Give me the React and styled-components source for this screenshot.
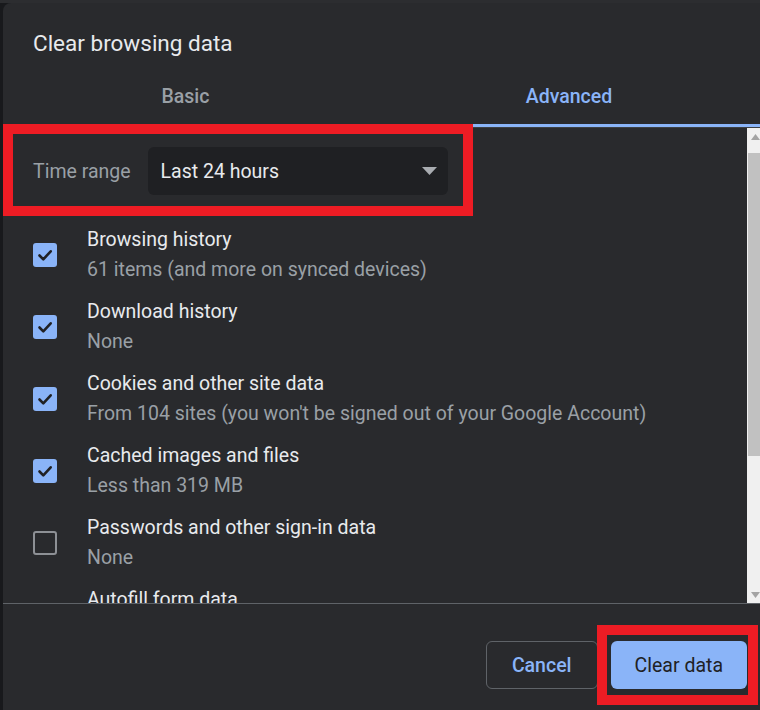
import styled, { createGlobalStyle } from "styled-components";

const GlobalStyle = createGlobalStyle`
    html, body {
        margin: 0;
        padding: 0;
        background: #18191c;
        overflow: hidden;
    }
    body {
        border-top: 3px solid #2c2d30;
        font-family: Roboto, "Liberation Sans", sans-serif;
    }
`

const Page = styled.div`
    display: flex;
    padding-left: 3px;
    height: 707px;
`

const Dialog = styled.div`
    position: relative;
    display: flex;
    flex-direction: column;
    width: 767px;
    flex-shrink: 0;
    height: 720px;
    background: #292a2d;
    border-radius: 8px 0 0 0;
    color: #e8eaed;
`

const Title = styled.h1`
    margin: 0;
    padding: 28px 30px 0;
    height: 38px;
    font-size: 22.5px;
    font-weight: 400;
    line-height: 24px;
    color: #e8eaed;
`

const TabBar = styled.div`
    display: grid;
    grid-template-columns: 365px 402px;
    border-bottom: 1px solid #3c4043;
`

const Tab = styled.div`
    display: flex;
    align-items: center;
    justify-content: center;
    height: 55px;
    font-size: 19.5px;
    font-weight: 500;
    color: ${props => props.active ? "#8ab4f8" : "#9aa0a6"};
    border-bottom: 3px solid ${props => props.active ? "#8ab4f8" : "transparent"};
`

const Body = styled.div`
    display: flex;
    height: 475px;
    border-bottom: 1px solid #5f6368;
`

const List = styled.div`
    flex: 1;
    overflow: hidden;
`

const TimeRow = styled.div`
    display: flex;
    align-items: center;
    gap: 17px;
    padding: 19px 30px 24px;
`

const Label = styled.span`
    font-size: 19.5px;
    color: #9aa0a6;
`

const Select = styled.div`
    display: flex;
    align-items: center;
    justify-content: space-between;
    box-sizing: border-box;
    width: 300px;
    height: 48px;
    padding: 0 11px 0 13px;
    background: #1f2023;
    border-radius: 6px;
    font-size: 19.5px;
    color: #e8eaed;
`

const Row = styled.div`
    display: flex;
    align-items: center;
    gap: 30px;
    padding: 6px 30px;
`

const Box = styled.div`
    display: flex;
    align-items: center;
    justify-content: center;
    box-sizing: border-box;
    width: 24px;
    height: 24px;
    flex-shrink: 0;
    border-radius: 3px;
    background: ${props => props.checked ? "#8ab4f8" : "transparent"};
    border: ${props => props.checked ? "none" : "2.5px solid #8d9095"};
`

const Texts = styled.div`
    display: flex;
    flex-direction: column;
`

const ItemTitle = styled.span`
    font-size: 19.5px;
    line-height: 30px;
    color: #e8eaed;
`

const ItemSub = styled.span`
    font-size: 19.5px;
    line-height: 30px;
    color: #9aa0a6;
`

const ScrollTrack = styled.div`
    display: flex;
    flex-direction: column;
    align-items: center;
    width: 17px;
    margin-right: 6px;
    background: #f0f0f0;
`

const ScrollButton = styled.div`
    display: flex;
    align-items: center;
    justify-content: center;
    width: 100%;
    height: 17px;
`

const Thumb = styled.div`
    width: 15px;
    height: 303px;
    margin-top: 8px;
    background: #c1c1c1;
`

const Spacer = styled.div`
    flex: 1;
`

const Footer = styled.div`
    display: flex;
    justify-content: flex-end;
    gap: 13px;
    padding: 37px 23px 0 0;
`

const Button = styled.button`
    height: 48px;
    padding: 0 ${props => props.primary ? "24px" : "25px"};
    border-radius: 6px;
    font-family: Roboto, "Liberation Sans", sans-serif;
    font-size: 19.5px;
    font-weight: ${props => props.primary ? 400 : 500};
    cursor: pointer;
    background: ${props => props.primary ? "#8ab4f8" : "transparent"};
    color: ${props => props.primary ? "#202124" : "#8ab4f8"};
    border: ${props => props.primary ? "none" : "1px solid #5f6368"};
`

// red annotation frames drawn over the screenshot
const Highlight = styled.div`
    position: absolute;
    left: ${props => props.left}px;
    top: ${props => props.top}px;
    width: ${props => props.width}px;
    height: ${props => props.height}px;
    box-sizing: border-box;
    border: 10px solid #ed1c24;
    pointer-events: none;
`

const items = [
    { title: "Browsing history", sub: "61 items (and more on synced devices)", checked: true },
    { title: "Download history", sub: "None", checked: true },
    { title: "Cookies and other site data", sub: "From 104 sites (you won't be signed out of your Google Account)", checked: true },
    { title: "Cached images and files", sub: "Less than 319 MB", checked: true },
    { title: "Passwords and other sign-in data", sub: "None", checked: false },
    { title: "Autofill form data", sub: "None", checked: false },
]

const Check = () => (
    <svg width="24" height="24" viewBox="0 0 24 24">
        <path d="M6.5 12.5l3.8 3.8 7.4-8" fill="none" stroke="#202124" strokeWidth="2.6" strokeLinecap="round" strokeLinejoin="round" />
    </svg>
)

const Arrow = ({ down }) => (
    <svg width="9" height="6" viewBox="0 0 9 6">
        <polygon points={down ? "0,0 9,0 4.5,6" : "0,6 9,6 4.5,0"} fill="#a3a3a3" />
    </svg>
)

const App = () => {
    return (
        <Page>
            <GlobalStyle />
            <Dialog>
                <Title>Clear browsing data</Title>
                <TabBar>
                    <Tab>Basic</Tab>
                    <Tab active>Advanced</Tab>
                </TabBar>
                <Body>
                    <List>
                        <TimeRow>
                            <Label>Time range</Label>
                            <Select>
                                Last 24 hours
                                <svg width="15" height="8" viewBox="0 0 15 8">
                                    <polygon points="0,0 15,0 7.5,8" fill="#a9acb1" />
                                </svg>
                            </Select>
                        </TimeRow>
                        {items.map(item => (
                            <Row key={item.title}>
                                <Box checked={item.checked}>{item.checked && <Check />}</Box>
                                <Texts>
                                    <ItemTitle>{item.title}</ItemTitle>
                                    <ItemSub>{item.sub}</ItemSub>
                                </Texts>
                            </Row>
                        ))}
                    </List>
                    <ScrollTrack>
                        <ScrollButton><Arrow /></ScrollButton>
                        <Thumb />
                        <Spacer />
                        <ScrollButton><Arrow down /></ScrollButton>
                    </ScrollTrack>
                </Body>
                <Footer>
                    <Button>Cancel</Button>
                    <Button primary>Clear data</Button>
                </Footer>
                <Highlight left={0} top={121} width={470} height={92} />
                <Highlight left={594} top={622} width={161} height={80} />
            </Dialog>
        </Page>
    )
}

export default App
